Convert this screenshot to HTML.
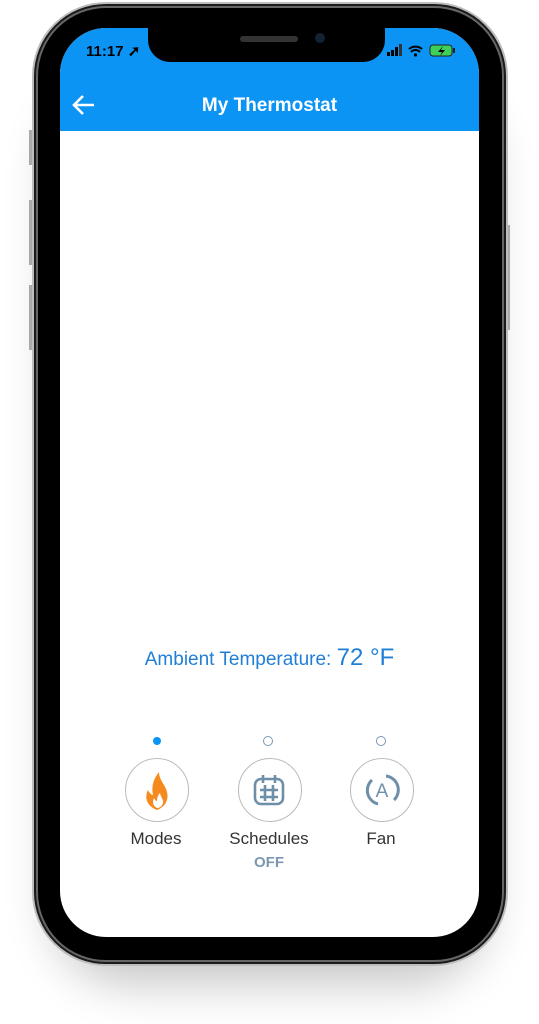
<!DOCTYPE html>
<html><head><style>
body{margin:0;width:539px;height:1024px;background:#fff;position:relative;overflow:hidden;font-family:"Liberation Sans",sans-serif}
.shadow{position:absolute;left:50px;top:60px;width:440px;height:900px;border-radius:80px;box-shadow:0 25px 45px rgba(0,0,0,.22);background:#ddd}
.outer{position:absolute;left:32px;top:2px;width:476px;height:964px;border-radius:74px;background:#1a1a1a;border:2px solid #bdbdbd;box-sizing:border-box}
.rim{position:absolute;left:36px;top:6px;width:468px;height:956px;border-radius:70px;border:2px solid #666;box-sizing:border-box;background:#000}
.screen{position:absolute;left:60px;top:28px;width:419px;height:909px;border-radius:46px;background:#fff;overflow:hidden}
.hdr{position:absolute;left:0;top:0;width:419px;height:103px;background:#0b94f4}
.notch{position:absolute;left:88px;top:-2px;width:237px;height:36px;background:#000;border-radius:0 0 22px 22px}
.btn{position:absolute;width:3px;background:#aaa}
</style></head><body>
<div class="shadow"></div>
<div class="btn" style="left:29px;top:130px;height:35px"></div>
<div class="btn" style="left:29px;top:200px;height:65px"></div>
<div class="btn" style="left:29px;top:285px;height:65px"></div>
<div class="btn" style="left:507px;top:225px;height:105px"></div>
<div class="outer"></div>
<div class="rim"></div>
<div class="screen">
 <div class="hdr"></div>
 <div class="notch"></div>
 <div style="position:absolute;left:180px;top:8px;width:58px;height:6px;border-radius:3px;background:#333"></div>
 <div style="position:absolute;left:255px;top:5px;width:10px;height:10px;border-radius:50%;background:#123"></div>
 <div style="position:absolute;left:26px;top:14px;color:#000;font-size:15px;font-weight:bold">11:17 ➚</div>
 <svg style="position:absolute;left:327px;top:16px" width="80" height="14">
  <rect x="0" y="8" width="3" height="4" fill="#000"/><rect x="4" y="6" width="3" height="6" fill="#000"/><rect x="8" y="3" width="3" height="9" fill="#000"/><rect x="12" y="0" width="3" height="12" fill="#333"/>
  <path d="M22 5a10 10 0 0 1 13 0M24 8a6 6 0 0 1 9 0" stroke="#000" stroke-width="2" fill="none"/><circle cx="28.5" cy="11" r="1.6"/>
  <rect x="43" y="1" width="22" height="11" rx="3" fill="#3cd05a" stroke="#222"/><rect x="66" y="4" width="2" height="5" fill="#222"/>
  <path d="M56 2l-5 6h4l-2 4 5-6h-4z" fill="#000"/>
 </svg>
 <svg style="position:absolute;left:12px;top:66px" width="24" height="22"><path d="M22 11H3M11 2L2 11l9 9" stroke="#fff" stroke-width="2.6" fill="none"/></svg>
 <div style="position:absolute;left:0;width:419px;top:67px;text-align:center;color:#fff;font-size:19px;font-weight:bold">My Thermostat</div>
 <div style="position:absolute;left:0;width:419px;top:616px;text-align:center;color:#1f7fd6;font-size:19px">Ambient Temperature: <span style="font-size:24px">72 °F</span></div>
 <div style="position:absolute;left:93px;top:709px;width:8px;height:8px;border-radius:50%;background:#0b94f4"></div>
 <div style="position:absolute;left:203px;top:708px;width:8px;height:8px;border-radius:50%;border:1.5px solid #7c98b0"></div>
 <div style="position:absolute;left:316px;top:708px;width:8px;height:8px;border-radius:50%;border:1.5px solid #7c98b0"></div>
 <div style="position:absolute;left:65px;top:730px;width:62px;height:62px;border-radius:50%;border:1px solid #bbb"></div>
 <div style="position:absolute;left:178px;top:730px;width:62px;height:62px;border-radius:50%;border:1px solid #bbb"></div>
 <div style="position:absolute;left:290px;top:730px;width:62px;height:62px;border-radius:50%;border:1px solid #bbb"></div>
 <svg style="position:absolute;left:84px;top:742px" width="26" height="40"><path d="M13 40C3 36 0 28 4 20c2 4 4 5 5 5C7 16 10 8 15 2c0 8 6 12 8 20 2 8-2 15-10 18z" fill="#f58a1f"/><path d="M13 38c-4-2-5-6-3-10 1 2 2 3 3 3 0-3 1-6 3-8 1 5 4 7 3 10-1 3-3 5-6 5z" fill="#fff"/></svg>
 <svg style="position:absolute;left:192px;top:745px" width="34" height="34" fill="none" stroke="#6e8fa8" stroke-width="2.6"><rect x="3" y="6" width="28" height="25" rx="6"/><path d="M11 2v8M23 2v8M13 12v16M21 12v16M8 17h18M8 24h18"/></svg>
 <svg style="position:absolute;left:304px;top:744px" width="36" height="36" fill="none" stroke="#6e8fa8" stroke-width="3"><path d="M8 8A14 14 0 0 0 14 32M22 4A14 14 0 0 1 30 28"/><text x="18" y="25" text-anchor="middle" font-family="Liberation Sans" font-size="19" fill="#6e8fa8" stroke="none">A</text></svg>
 <div style="position:absolute;left:46px;width:100px;top:801px;text-align:center;color:#333;font-size:17px">Modes</div>
 <div style="position:absolute;left:159px;width:100px;top:801px;text-align:center;color:#333;font-size:17px">Schedules</div>
 <div style="position:absolute;left:271px;width:100px;top:801px;text-align:center;color:#333;font-size:17px">Fan</div>
 <div style="position:absolute;left:159px;width:100px;top:826px;text-align:center;color:#7c98b0;font-size:15px;font-weight:bold">OFF</div>
</div>
</body></html>
